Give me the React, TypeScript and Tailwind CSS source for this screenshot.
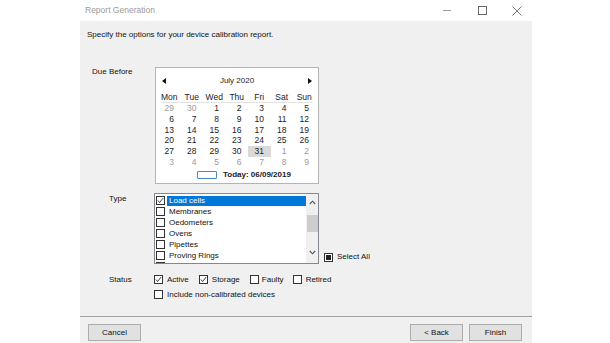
import React from "react";

const F = { fontFamily: '"Liberation Sans", Arial, sans-serif' };

function Check({ checked, size = 9 }: { checked?: boolean; size?: number }) {
  return (
    <div
      className="border border-[#333333] bg-white flex items-center justify-center shrink-0"
      style={{ width: size, height: size }}
    >
      {checked && (
        <svg width={size - 2} height={size - 2} viewBox="0 0 8 8">
          <polyline points="1,4 3,6.3 7,1.2" fill="none" stroke="#222" strokeWidth="1" />
        </svg>
      )}
    </div>
  );
}

const rows: [string, boolean][][] = [
  [["29", true], ["30", true], ["1", false], ["2", false], ["3", false], ["4", false], ["5", false]],
  [["6", false], ["7", false], ["8", false], ["9", false], ["10", false], ["11", false], ["12", false]],
  [["13", false], ["14", false], ["15", false], ["16", false], ["17", false], ["18", false], ["19", false]],
  [["20", false], ["21", false], ["22", false], ["23", false], ["24", false], ["25", false], ["26", false]],
  [["27", false], ["28", false], ["29", false], ["30", false], ["31", false], ["1", true], ["2", true]],
  [["3", true], ["4", true], ["5", true], ["6", true], ["7", true], ["8", true], ["9", true]],
];

const days = ["Mon", "Tue", "Wed", "Thu", "Fri", "Sat", "Sun"];

const items = ["Load cells", "Membranes", "Oedometers", "Ovens", "Pipettes", "Proving Rings", "Rulers"];

export default function App() {
  return (
    <div className="w-[610px] h-[343px] bg-white flex text-[8px] text-[#111111] overflow-hidden" style={F}>
      <div className="ml-[80px] w-[452px] flex flex-col">
        {/* title bar */}
        <div className="h-[21px] flex items-center pl-[5px] relative">
          <span className="text-[#9a9a9a] text-[8.5px]">Report Generation</span>
          <div className="ml-auto flex items-center h-full">
            <div className="w-[8px] h-px bg-[#9a9a9a] mr-[27px]" />
            <div className="w-[9px] h-[9px] border border-[#6a6a6a] mr-[25px]" />
            <svg width="10" height="10" viewBox="0 0 10 10" className="mr-[10px]">
              <path d="M0.5 0.5 L9.5 9.5 M9.5 0.5 L0.5 9.5" stroke="#6a6a6a" strokeWidth="0.9" />
            </svg>
          </div>
        </div>
        {/* content */}
        <div className="bg-[#f0f0f0] h-[322px] flex flex-col">
          <div className="mt-[9px] ml-[7px] leading-[10px]">Specify the options for your device calibration report.</div>

          {/* Due before */}
          <div className="flex mt-[27px]">
            <div className="w-[75px] pl-[12px] leading-[10px]">Due Before</div>
            <div className="w-[164px] h-[117px] border border-[#b4b4b4] bg-white flex flex-col text-[8.5px] text-[#1a1a2a]">
              <div className="mt-[8px] h-[10px] flex items-center pl-[6px] pr-[6px] leading-[10px]">
                <svg width="4" height="6" viewBox="0 0 4 6"><polygon points="4,0 4,6 0,3" fill="#111" /></svg>
                <span className="flex-1 text-center text-[8px]">July 2020</span>
                <svg width="4" height="6" viewBox="0 0 4 6"><polygon points="0,0 0,6 4,3" fill="#111" /></svg>
              </div>
              <div className="mt-[6px] mx-[5px] border-b border-[#e3e3e3]">
                <div className="grid grid-cols-[repeat(7,22.5px)] -ml-[3px] h-[10px] leading-[10px]">
                  {days.map((d) => (
                    <div key={d} className="text-center">{d}</div>
                  ))}
                </div>
              </div>
              <div className="pl-[2px]">
                {rows.map((r, i) => (
                  <div key={i} className="grid grid-cols-[repeat(7,22.5px)] h-[10.8px] leading-[10.8px]">
                    {r.map(([n, g], j) => (
                      <div
                        key={j}
                        className={
                          "text-right pr-[6.5px] " +
                          (g ? "text-[#9a9a9a] " : "") +
                          (i === 4 && j === 4 ? "bg-[#d9d9d9]" : "")
                        }
                      >
                        {n}
                      </div>
                    ))}
                  </div>
                ))}
              </div>
              <div className="mt-[2px] h-[10px] flex items-center pl-[41px]">
                <div className="w-[20px] h-[8px] border border-[#4a8ac4] rounded-[1px]" />
                <span className="ml-[6px] font-bold text-[8px]">Today: 06/09/2019</span>
              </div>
            </div>
          </div>

          {/* Type */}
          <div className="flex mt-[9px]">
            <div className="w-[74px] pl-[29px] leading-[10px] mt-[1px]">Type</div>
            <div className="w-[165px] h-[71px] border border-[#828790] bg-white flex overflow-hidden">
              <div className="flex-1 flex flex-col pt-[1px]">
                {items.map((it, i) => (
                  <div key={it} className="h-[11px] flex items-center shrink-0">
                    <div className="ml-[1px]">
                      <Check checked={i === 0} size={9} />
                    </div>
                    <div
                      className={
                        "ml-[2px] flex-1 h-[10px] leading-[10px] pl-[2px] " +
                        (i === 0 ? "bg-[#0078d7] text-white" : "")
                      }
                    >
                      {it}
                    </div>
                  </div>
                ))}
              </div>
              <div className="w-[12px] bg-[#f0f0f0] flex flex-col items-center">
                <svg width="7" height="5" viewBox="0 0 7 5" className="mt-[6px]">
                  <polyline points="0.8,4 3.5,1.2 6.2,4" fill="none" stroke="#555" strokeWidth="1.1" />
                </svg>
                <div className="mt-[10px] w-[11px] h-[17px] bg-[#cdcdcd]" />
                <svg width="7" height="5" viewBox="0 0 7 5" className="mt-[18px]">
                  <polyline points="0.8,1 3.5,3.8 6.2,1" fill="none" stroke="#555" strokeWidth="1.1" />
                </svg>
              </div>
            </div>
            <div className="self-end mb-[2px] ml-[5px] flex items-center">
              <div className="w-[9px] h-[9px] border border-[#333] bg-white flex items-center justify-center">
                <div className="w-[5px] h-[5px] bg-[#222]" />
              </div>
              <span className="ml-[4px] leading-[10px]">Select All</span>
            </div>
          </div>

          {/* Status */}
          <div className="flex mt-[11px] items-center h-[9px]">
            <div className="w-[74px] pl-[29px] leading-[10px]">Status</div>
            <Check checked />
            <span className="ml-[4px]">Active</span>
            <div className="ml-[10px]"><Check checked /></div>
            <span className="ml-[4px]">Storage</span>
            <div className="ml-[10px]"><Check /></div>
            <span className="ml-[3px]">Faulty</span>
            <div className="ml-[9px]"><Check /></div>
            <span className="ml-[4px]">Retired</span>
          </div>

          <div className="flex mt-[6px] items-center h-[9px] pl-[74px]">
            <Check />
            <span className="ml-[4px]">Include non-calibrated devices</span>
          </div>

          {/* footer */}
          <div className="mt-auto border-t border-[#a0a0a0] pt-[7px] pb-[2px] flex">
            <button className="ml-[8px] w-[53px] h-[17px] bg-[#e1e1e1] border border-[#adadad] text-[8px] leading-[15px]">
              Cancel
            </button>
            <button className="ml-auto w-[53px] h-[17px] bg-[#e1e1e1] border border-[#adadad] text-[8px] leading-[15px]">
              &lt; Back
            </button>
            <button className="ml-[6px] mr-[10px] w-[53px] h-[17px] bg-[#e1e1e1] border border-[#adadad] text-[8px] leading-[15px]">
              Finish
            </button>
          </div>
        </div>
      </div>
    </div>
  );
}
